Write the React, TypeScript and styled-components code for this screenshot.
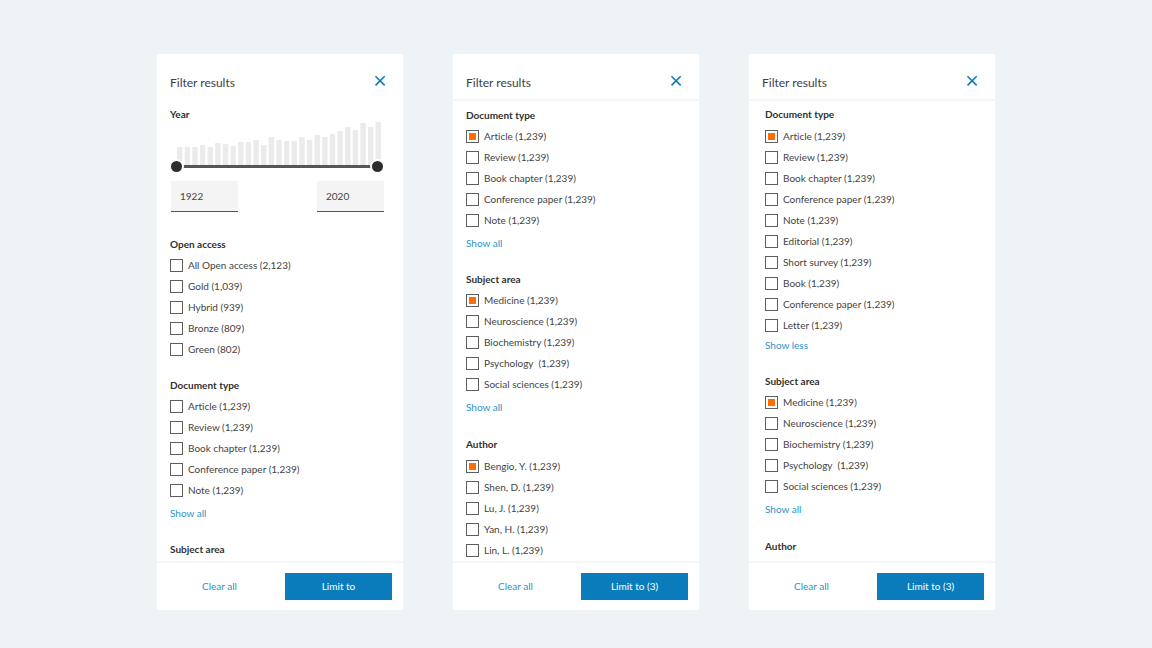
import React, { useState } from 'react';
import styled, { createGlobalStyle } from 'styled-components';

const GlobalStyle = createGlobalStyle`
  *, *::before, *::after { box-sizing: border-box; }
  body {
    margin: 0;
    background: #edf3f6;
    color: #444;
    font-family: Lato, "Liberation Sans", sans-serif;
    font-size: 10px;
    font-variant-ligatures: none;
  }
  button, input { font: inherit; }
`;

const Page = styled.main`
  display: flex;
  justify-content: center;
  gap: 50px;
  height: 100vh;
  min-height: 400px;
  padding: 54px 24px 38px;
`;

const PanelBox = styled.section`
  display: flex;
  flex-direction: column;
  flex: 0 1 246px;
  min-width: 0;
  background: #fff;
`;

const Header = styled.header<{ $scrolled: boolean }>`
  display: flex;
  align-items: flex-start;
  justify-content: space-between;
  flex: none;
  padding: 13px 17px 0 13px;
  border-bottom: 2px solid ${p => (p.$scrolled ? '#f4f5f5' : 'transparent')};
`;

const Title = styled.h2`
  margin: 0;
  font-size: 12px;
  font-weight: 400;
  line-height: 32px;
  color: #404040;
`;

const CloseButton = styled.button`
  display: flex;
  align-items: center;
  height: 28px;
  padding: 0;
  border: 0;
  background: none;
  color: #0b7cbb;
  cursor: pointer;
`;

const Body = styled.div<{ $inset: number; $top: number }>`
  flex: 1;
  min-height: 0;
  overflow-y: auto;
  scrollbar-width: none;
  padding: ${p => p.$top}px 19px 0 ${p => p.$inset}px;
`;

const Group = styled.fieldset<{ $loose?: boolean }>`
  min-width: 0;
  margin: 0 0 15px;
  padding: ${p => (p.$loose ? 1 : 0)}px 0 0;
  border: 0;
`;

const Heading = styled.h3<{ $loose?: boolean }>`
  margin: 0 0 ${p => (p.$loose ? 1 : 0)}px;
  font-size: 10px;
  font-weight: 700;
  line-height: 21px;
  color: #303030;
`;

const Option = styled.label`
  display: flex;
  align-items: center;
  gap: 5px;
  height: 21px;
  white-space: pre;
  cursor: pointer;
`;

const OptionText = styled.span`
  padding-bottom: 2px;
`;

const Box = styled.input`
  appearance: none;
  display: grid;
  place-content: center;
  width: 13px;
  height: 13px;
  margin: 0;
  border: 1px solid #5e5e5e;
  background: #fff;

  &:checked::before {
    content: '';
    width: 7px;
    height: 7px;
    background: #ff6c00;
  }
`;

const MoreLink = styled.a<{ $tight?: boolean }>`
  display: block;
  width: fit-content;
  margin-top: ${p => (p.$tight ? -1 : 2)}px;
  line-height: 21px;
  color: #2b93c9;
  text-decoration: none;
`;

const Histogram = styled.div`
  display: grid;
  height: 52px;
  margin-top: -3px;

  > * { grid-area: 1 / 1; }
`;

const Bars = styled.svg`
  width: calc(100% - 10px);
  height: 43px;
  margin-left: 7px;
`;

const Slider = styled.div`
  display: grid;
  align-self: end;
  align-items: center;
  height: 15px;
  margin: 0 1px 0 1px;

  > * { grid-area: 1 / 1; }
`;

const Track = styled.div`
  height: 3px;
  background: #555;
`;

const Range = styled.input`
  appearance: none;
  width: 100%;
  height: 15px;
  margin: 0;
  background: none;
  pointer-events: none;

  &::-webkit-slider-thumb {
    appearance: none;
    width: 11px;
    height: 11px;
    border-radius: 50%;
    background: #2d2d2d;
    box-shadow: 0 0 0 2px #fff;
    pointer-events: auto;
    cursor: pointer;
  }
`;

const YearRow = styled.div`
  display: flex;
  justify-content: space-between;
  margin: 7px 0 22px 1px;
`;

const YearInput = styled.input`
  width: 67px;
  height: 31px;
  padding: 0 10px 1px 9px;
  border: 0;
  border-bottom: 1px solid #555;
  border-radius: 0;
  background: #f4f4f4;
  color: #444;
`;

const Footer = styled.footer`
  display: flex;
  align-items: center;
  gap: 16px;
  flex: none;
  height: 49px;
  padding: 0 11px 0 13px;
  border-top: 2px solid #f4f5f5;
`;

const ClearButton = styled.button`
  flex: 1;
  padding: 0 0 2px;
  border: 0;
  background: none;
  color: #2b93c9;
  cursor: pointer;
`;

const LimitButton = styled.button`
  flex: 0 0 107px;
  height: 27px;
  padding: 0 0 2px;
  border: 0;
  background: #0b7cbb;
  color: #fff;
  cursor: pointer;
`;

const barHeights = [
  18, 18, 18, 20, 18, 22, 21, 19, 23, 23, 25, 20, 28, 25, 24, 24, 28, 25, 30,
  28, 31, 34, 38, 35, 42, 38, 43,
];

function YearFilter() {
  const [from, setFrom] = useState('1922');
  const [to, setTo] = useState('2020');
  return (
    <div>
      <Heading>Year</Heading>
      <Histogram>
        <Bars viewBox="0 0 204 43" preserveAspectRatio="none" aria-hidden="true">
          {barHeights.map((h, i) => (
            <rect key={i} x={i * 7.64} y={43 - h} width="5.4" height={h} fill="#ebebeb" />
          ))}
        </Bars>
        <Slider>
          <Track />
          <Range type="range" aria-label="From year" min="1922" max="2020" value={from} onChange={e => setFrom(e.target.value)} />
          <Range type="range" aria-label="To year" min="1922" max="2020" value={to} onChange={e => setTo(e.target.value)} />
        </Slider>
      </Histogram>
      <YearRow>
        <YearInput aria-label="From" value={from} onChange={e => setFrom(e.target.value)} />
        <YearInput aria-label="To" value={to} onChange={e => setTo(e.target.value)} />
      </YearRow>
    </div>
  );
}

interface FilterGroup {
  title: string;
  options: string[];
  checked?: boolean;
  more?: string;
  loose?: boolean;
}

function OptionGroup({ title, options, checked, more, loose }: FilterGroup) {
  return (
    <Group $loose={loose} aria-label={title}>
      <Heading $loose={loose}>{title}</Heading>
      {options.map((text, i) => (
        <Option key={i}>
          <Box type="checkbox" defaultChecked={checked && i === 0} />
          <OptionText>{text}</OptionText>
        </Option>
      ))}
      {more && <MoreLink href="#" $tight={more === 'Show less'}>{more}</MoreLink>}
    </Group>
  );
}

interface PanelProps {
  groups: FilterGroup[];
  action: string;
  year?: boolean;
  inset?: number;
  top?: number;
}

function FilterPanel({ groups, action, year = false, inset = 13, top = 3 }: PanelProps) {
  return (
    <PanelBox>
      <Header $scrolled={!year}>
        <Title>Filter results</Title>
        <CloseButton type="button" aria-label="Close">
          <svg width="12" height="12" viewBox="0 0 12 12" fill="none" stroke="currentColor" strokeWidth="1.6">
            <path d="M1.5 1.2l9.2 9.2M10.7 1.2l-9.2 9.2" />
          </svg>
        </CloseButton>
      </Header>
      <Body $inset={inset} $top={top}>
        {year && <YearFilter />}
        {groups.map(g => <OptionGroup key={g.title} {...g} />)}
      </Body>
      <Footer>
        <ClearButton type="button">Clear all</ClearButton>
        <LimitButton type="button">{action}</LimitButton>
      </Footer>
    </PanelBox>
  );
}

const openAccess = ['All Open access (2,123)', 'Gold (1,039)', 'Hybrid (939)', 'Bronze (809)', 'Green (802)'];
const documentTypes = ['Article (1,239)', 'Review (1,239)', 'Book chapter (1,239)', 'Conference paper (1,239)', 'Note (1,239)'];
const moreTypes = ['Editorial (1,239)', 'Short survey (1,239)', 'Book (1,239)', 'Conference paper (1,239)', 'Letter (1,239)'];
const subjects = ['Medicine (1,239)', 'Neuroscience (1,239)', 'Biochemistry (1,239)', 'Psychology  (1,239)', 'Social sciences (1,239)'];
const authors = ['Bengio, Y. (1,239)', 'Shen, D. (1,239)', 'Lu, J. (1,239)', 'Yan, H. (1,239)', 'Lin, L. (1,239)'];

export default function App() {
  return (
    <>
      <GlobalStyle />
      <Page>
        <FilterPanel
          year
          action="Limit to"
          groups={[
            { title: 'Open access', options: openAccess },
            { title: 'Document type', options: documentTypes, more: 'Show all' },
            { title: 'Subject area', options: [] },
          ]}
        />
        <FilterPanel
          action="Limit to (3)"
          top={4}
          groups={[
            { title: 'Document type', options: documentTypes, checked: true, more: 'Show all' },
            { title: 'Subject area', options: subjects, checked: true, more: 'Show all' },
            { title: 'Author', options: authors, checked: true, loose: true },
          ]}
        />
        <FilterPanel
          action="Limit to (3)"
          inset={16}
          top={2}
          groups={[
            { title: 'Document type', options: [...documentTypes, ...moreTypes], checked: true, more: 'Show less', loose: true },
            { title: 'Subject area', options: subjects, checked: true, more: 'Show all' },
            { title: 'Author', options: [], loose: true },
          ]}
        />
      </Page>
    </>
  );
}
